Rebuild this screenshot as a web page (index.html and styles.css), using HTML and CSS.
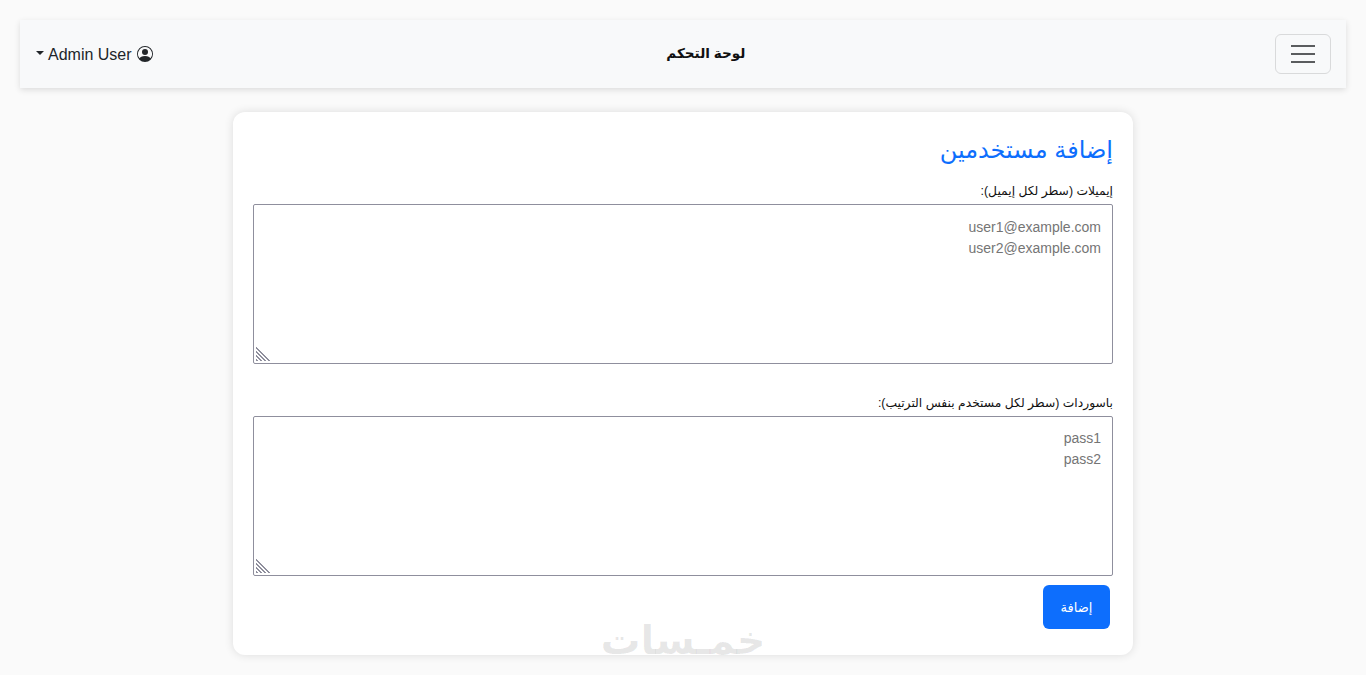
FILE: index.html
```html
<!DOCTYPE html>
<html lang="ar">
<head>
  <meta charset="UTF-8">
  <title>لوحة التحكم</title>
  <link rel="stylesheet" href="styles.css">
</head>
<body>

  <nav class="navbar">
    <div class="user-menu">
      <span class="caret"></span>
      <span class="user-name">Admin User</span>
      <svg class="user-icon" viewBox="0 0 16 16" width="16" height="16" fill="#212529">
        <path d="M11 6a3 3 0 1 1-6 0 3 3 0 0 1 6 0z"/>
        <path fill-rule="evenodd" d="M0 8a8 8 0 1 1 16 0A8 8 0 0 1 0 8zm8-7a7 7 0 0 0-5.468 11.37C3.242 11.226 4.805 10 8 10s4.757 1.225 5.468 2.37A7 7 0 0 0 8 1z"/>
      </svg>
    </div>
    <div class="brand">لوحة التحكم</div>
    <button class="toggler" type="button">
      <span></span><span></span><span></span>
    </button>
  </nav>

  <main class="card" dir="rtl">
    <h2>إضافة مستخدمين</h2>
    <form>
      <label for="emails">إيميلات (سطر لكل إيميل):</label>
      <div class="field first">
        <textarea id="emails" placeholder="user1@example.com&#10;user2@example.com"></textarea>
        <span class="grip"></span>
      </div>
      <label for="passwords">باسوردات (سطر لكل مستخدم بنفس الترتيب):</label>
      <div class="field">
        <textarea id="passwords" placeholder="pass1&#10;pass2"></textarea>
        <span class="grip"></span>
      </div>
      <button class="btn-add" type="button">إضافة</button>
    </form>
  </main>

  <div class="watermark" dir="rtl">خمـسات</div>

</body>
</html>
```

FILE: styles.css
```css
html, body {
  height: 100%;
}
body {
  margin: 0;
  padding: 20px 20px 0;
  box-sizing: border-box;
  font-family: "Liberation Sans", Arial, "DejaVu Sans", sans-serif;
  font-size: 16px;
  color: #212529;
  background: #fafafa;
  overflow: hidden;
}
.navbar {
  display: flex;
  align-items: center;
  justify-content: space-between;
  height: 68px;
  padding: 0 15px 0 16px;
  background: #f8f9fa;
  box-shadow: 0 2px 6px rgba(0,0,0,0.12);
}
.user-menu {
  display: flex;
  align-items: center;
  color: #212529;
}
.caret {
  width: 0;
  height: 0;
  margin: 0 4px 2px 0;
  border-top: 4.8px solid #212529;
  border-left: 4.8px solid transparent;
  border-right: 4.8px solid transparent;
}
.user-name {
  padding-top: 2px;
}
.user-icon {
  margin-left: 5px;
}
.brand {
  margin-right: 16px;
  padding-bottom: 2px;
  font-size: 13.6px;
  font-weight: bold;
  color: #111;
}
.toggler {
  display: flex;
  flex-direction: column;
  justify-content: center;
  gap: 6px;
  width: 56px;
  height: 40px;
  padding: 0 15px;
  background: transparent;
  border: 1px solid #d9dadb;
  border-radius: 6px;
}
.toggler span {
  display: block;
  height: 2px;
  background: #5a5c5e;
}
.card {
  width: 900px;
  height: 543px;
  margin: 24px auto 0;
  padding: 20px;
  box-sizing: border-box;
  background: #fff;
  border-radius: 12px;
  box-shadow: 0 0 10px rgba(0,0,0,0.12);
}
h2 {
  margin: 0 0 11px;
  font-size: 24px;
  font-weight: normal;
  line-height: 36px;
  color: #0d6efd;
}
label {
  display: block;
  margin-bottom: 1px;
  font-size: 12.3px;
  line-height: 24px;
  color: #111;
}
.field {
  position: relative;
}
.field.first {
  margin-bottom: 27px;
}
.field.first textarea {
  padding-top: 12px;
}
textarea {
  display: block;
  width: 100%;
  height: 160px;
  box-sizing: border-box;
  padding: 11px;
  font-family: inherit;
  font-size: 14px;
  line-height: 21px;
  border: 1px solid #8f8f9d;
  border-radius: 2px;
  background: #fff;
  resize: none;
}
.grip {
  position: absolute;
  left: 3px;
  bottom: 3px;
  width: 15px;
  height: 15px;
  background:
    linear-gradient(to top right, transparent 50%, #fff 50%),
    repeating-linear-gradient(45deg, #8f8f9d 0 1.5px, transparent 1.5px 3px);
}
.btn-add {
  display: block;
  width: 67px;
  height: 44px;
  margin: 9px 3px 0 0;
  font-family: inherit;
  font-size: 13px;
  color: #fff;
  background: #0d6efd;
  border: none;
  border-radius: 6px;
}
.watermark {
  position: absolute;
  left: 600px;
  top: 615px;
  width: 166px;
  text-align: center;
  white-space: nowrap;
  font-size: 40px;
  font-weight: bold;
  line-height: 50px;
  color: rgba(0,0,0,0.09);
}
```
